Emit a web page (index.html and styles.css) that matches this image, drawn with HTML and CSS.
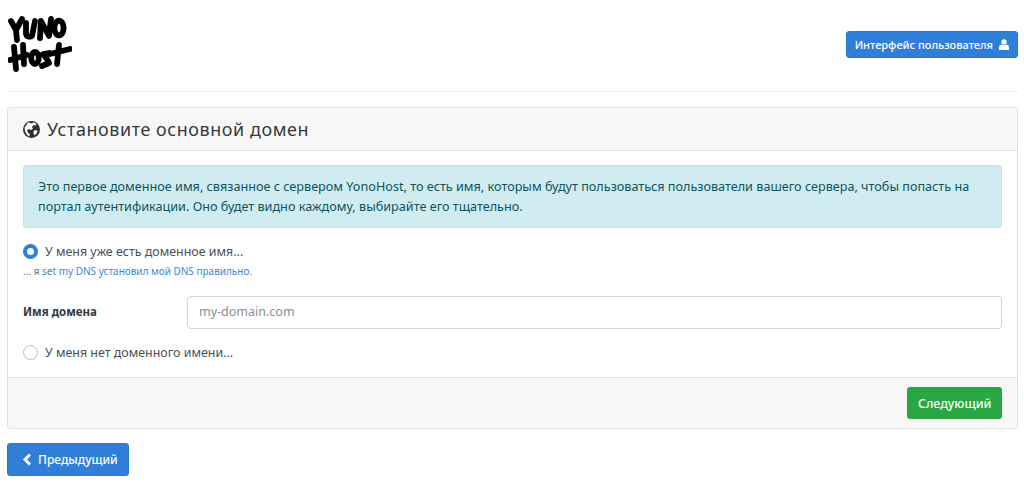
FILE: index.html
```html
<!DOCTYPE html>
<html lang="ru">
<head>
<meta charset="utf-8">
<title>YunoHost</title>
<link rel="stylesheet" href="styles.css">
</head>
<body>
<header class="top">
  <svg class="logo" width="64" height="58" viewBox="0 0 64 58" fill="none" stroke="#000" stroke-width="5.8" stroke-linecap="round" stroke-linejoin="round">
    <path d="M3 5L8 14L14 3M8 14L9 24"/>
    <path d="M18 7L18 18Q19 22 24 20L27 5"/>
    <path d="M32 22L33 5L41 20L43 3"/>
    <ellipse cx="51" cy="12" rx="4.6" ry="7.4"/>
    <path d="M6 31L8 53M15 29L16 48M2 44L19 39"/>
    <ellipse cx="27" cy="42" rx="3.8" ry="6"/>
    <path d="M41 37L35 38L39 43L41 47L34 50"/>
    <path d="M51 29L49 48M42 38L62 33"/>
  </svg>
  <a class="btn btn-primary btn-sm" href="#">Интерфейс пользователя
    <svg class="ico-user" width="10" height="11" viewBox="0 0 10 11" fill="#fff"><circle cx="5" cy="3" r="2.7"/><path d="M0 11V8.2Q0 5.6 2.4 5.4Q5 7.2 7.6 5.4Q10 5.6 10 8.2V11Z"/></svg>
  </a>
</header>
<hr class="rule">
<section class="card">
  <h2 class="card-head">
    <svg class="ico-globe" width="17" height="17" viewBox="0 0 17 17"><circle cx="8.5" cy="8.5" r="8.5" fill="#2b3035"/><path d="M5 1.6L9 2.4L10.6 1.2L13.6 3L12.6 4.6L10.6 4L9 6L10 7.5L8 9L5.6 8L4 9.5L5.2 12L7 13L6.2 15.6L4 14L2 10L1.6 6.5Z" fill="#fff"/><path d="M11 9.2L14.6 9.6L13.6 12.6L11.4 14.4L10.4 12Z" fill="#fff"/></svg>
    Установите основной домен
  </h2>
  <div class="card-body">
    <div class="alert">Это первое доменное имя, связанное с сервером YonoHost, то есть имя, которым будут пользоваться пользователи вашего сервера, чтобы попасть на портал аутентификации. Оно будет видно каждому, выбирайте его тщательно.</div>
    <label class="radio"><span class="dot dot-on"></span>У меня уже есть доменное имя...</label>
    <p class="hint">... я <a href="#">set my DNS установил мой DNS правильно</a>.</p>
    <div class="field">
      <label class="field-label">Имя домена</label>
      <input class="field-input" type="text" placeholder="my-domain.com">
    </div>
    <label class="radio"><span class="dot"></span>У меня нет доменного имени...</label>
  </div>
  <div class="card-foot"><a class="btn btn-success" href="#">Следующий</a></div>
</section>
<a class="btn btn-primary btn-prev" href="#">
  <svg width="10" height="13" viewBox="0 0 10 13" fill="none" stroke="#fff" stroke-width="3"><path d="M8 1.5L3 6.5L8 11.5"/></svg>
  Предыдущий</a>
</body>
</html>
```
FILE: styles.css
```css
* { box-sizing: border-box; }
html, body { margin: 0; }
body { padding: 0 6px 0 7px; background: #fff; color: #343a40; font-family: "Noto Sans", sans-serif; font-size: 13px; }
.top { display: flex; justify-content: space-between; align-items: center; height: 91px; padding-top: 1px; }
.logo { display: block; margin: 0 0 3px 1px; filter: blur(.5px); }
.rule { border: 0; border-top: 1px solid #e9ecef; margin: 0 0 15px; }
.btn { display: inline-flex; align-items: center; color: #fff; text-decoration: none; border-radius: 3px; font-weight: 500; }
.btn-primary { background: #2f7ed8; border: 1px solid #2c7ad0; }
.btn-sm { height: 27px; padding: 0 8px; font-size: 11px; gap: 6px; margin-top: -3px; }
.btn-success { background: #28a745; height: 32px; padding: 0 10.5px; font-size: 12.4px; }
.btn-prev { height: 33px; margin-top: 14px; padding: 0 10px 0 14px; font-size: 12px; gap: 6px; }
.card { border: 1px solid #dfdfdf; border-radius: 4px; }
.card-head { margin: 0; height: 43px; display: flex; align-items: center; gap: 7px; padding: 0 15px; background: #f7f7f7; border-bottom: 1px solid #dfdfdf; font-size: 17.9px; font-weight: 400; letter-spacing: .6px; color: #343a40; border-radius: 4px 4px 0 0; }
.card-body { padding: 14px 15px 0; height: 226px; }
.alert { background: #d1ecf1; border: 1px solid #bee5eb; border-radius: 3px; height: 63px; padding: 10px 14px; line-height: 20px; font-size: 12.65px; color: #0c5460; }
.radio { display: flex; align-items: center; gap: 7px; font-size: 12.45px; color: #495057; }
.alert + .radio { margin-top: 15px; }
.dot { width: 15px; height: 15px; border-radius: 50%; border: 1px solid #b9bec3; background: #fff; flex: none; }
.dot-on { background: #2f7ed8; border: 4px solid #2f7ed8; position: relative; }
.dot-on::after { content: ""; position: absolute; inset: 0; border-radius: 50%; background: #fff; }
.hint { margin: 5px 0 0; font-size: 10px; color: #6c757d; line-height: 12px; }
.hint a { color: #3f86d8; text-decoration: none; }
.field { display: flex; align-items: center; margin-top: 19px; }
.field-label { width: 164px; padding-bottom: 2px; font-size: 11.5px; font-weight: 700; color: #343a40; }
.field-input { flex: 1; height: 33px; border: 1px solid #ced4da; border-radius: 4px; padding: 0 12px 2px 11px; font: 12.5px "Noto Sans", sans-serif; color: #495057; outline: 0; }
.field-input::placeholder { color: #868e96; opacity: 1; }
.field + .radio { margin-top: 15px; }
.card-foot { display: flex; justify-content: flex-end; align-items: center; height: 51px; padding: 0 15px; background: #f7f7f7; border-top: 1px solid #dfdfdf; border-radius: 0 0 4px 4px; }
```
